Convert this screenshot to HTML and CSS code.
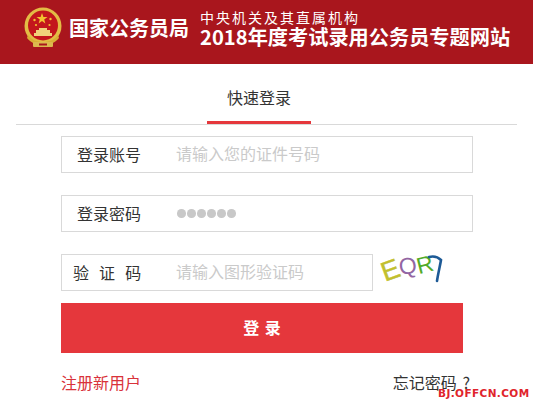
FILE: index.html
```html
<!DOCTYPE html>
<html lang="zh-CN">
<head>
    <meta charset="UTF-8">
    <meta name="viewport" content="width=device-width, initial-scale=1.0">
    <title>快速登录</title>
    <link rel="stylesheet" href="styles.css">
</head>
<body>
    <header class="top">
        <svg class="emblem" width="40" height="42" viewBox="0 0 40 42">
            <circle cx="20" cy="19" r="18.5" fill="#e3bc45"/>
            <circle cx="20" cy="18.5" r="15" fill="#c3161c"/>
            <polygon points="19,6 20.4,10 24.5,10 21.2,12.4 22.4,16.4 19,14 15.6,16.4 16.8,12.4 13.5,10 17.6,10" fill="#f2c230"/>
            <circle cx="11.5" cy="13" r="1.2" fill="#f2c230"/>
            <circle cx="27.5" cy="12" r="1.2" fill="#f2c230"/>
            <circle cx="13" cy="18" r="1.1" fill="#f2c230"/>
            <circle cx="26.5" cy="18" r="1.1" fill="#f2c230"/>
            <path d="M11 26h18v3H11zM13 23h14v3H13zM16 21h8v2h-8z" fill="#f0d27a"/>
            <path d="M5 28c4 5 9 7 15 7s11-2 15-7l1 3c-4 5-10 7-16 7s-12-2-16-7z" fill="#d9ae35"/>
            <rect x="10" y="35" width="20" height="5" rx="1" fill="#dcb84e"/>
            <rect x="16" y="36.5" width="8" height="2" fill="#a9161d"/>
        </svg>
        <div class="org">国家公务员局</div>
        <div class="titles">
            <div class="sub">中央机关及其直属机构</div>
            <div class="main">2018年度考试录用公务员专题网站</div>
        </div>
    </header>

    <div class="tabs">
        <span class="tab">快速登录</span>
    </div>

    <form class="login">
        <div class="field">
            <label class="name">登录账号</label>
            <span class="hint">请输入您的证件号码</span>
        </div>
        <div class="field">
            <label class="name">登录密码</label>
            <span class="dots"><i></i><i></i><i></i><i></i><i></i><i></i></span>
        </div>
        <div class="code-row">
            <div class="field short">
                <label class="name wide">验 证 码</label>
                <span class="hint">请输入图形验证码</span>
            </div>
            <svg class="captcha" width="64" height="32" viewBox="0 0 64 32">
                <text x="0" y="25" class="c1" transform="rotate(-20 9 18)">E</text>
                <text x="17" y="20" class="c2" transform="rotate(-8 25 14)">Q</text>
                <text x="35" y="19" class="c3" transform="rotate(-14 41 12)">R</text>
                <path d="M47 3c4-1 9 0 12 3-1 6-3 14-4 21" fill="none" stroke="#1d5a96" stroke-width="2.6" stroke-linecap="round"/>
            </svg>
        </div>
        <button class="submit" type="button">登 录</button>
        <div class="links">
            <a class="reg" href="#">注册新用户</a>
            <a class="forgot" href="#">忘记密码 ?</a>
        </div>
    </form>

    <div class="mark">BJ.OFFCN.COM</div>
</body>
</html>
```

FILE: styles.css
```css
html, body {
    height: 402px;
    overflow: hidden;
}
body {
    position: relative;
    margin: 0;
    background: #ffffff;
    font-family: "Noto Sans CJK SC", "Liberation Sans", sans-serif;
    color: #333333;
}
.top {
    display: flex;
    align-items: center;
    height: 64px;
    padding-left: 23px;
    background: #a9161d;
    color: #ffffff;
}
.emblem {
    flex: none;
    margin-top: -8px;
}
.org {
    margin-left: 6px;
    margin-top: -9px;
    width: 125px;
    font-size: 20px;
    font-weight: 700;
    line-height: 24px;
    white-space: nowrap;
}
.titles {
    margin-left: 6px;
    margin-top: -6px;
}
.sub {
    font-size: 14px;
    line-height: 16px;
    letter-spacing: 2px;
    white-space: nowrap;
}
.main {
    font-size: 20.2px;
    font-weight: 700;
    line-height: 24px;
    white-space: nowrap;
}
.tabs {
    display: flex;
    justify-content: center;
    height: 60px;
    margin: 0 16px;
    padding-right: 15px;
    border-bottom: 1px solid #d9d9d9;
}
.tab {
    width: 104px;
    height: 60px;
    box-sizing: border-box;
    border-bottom: 3px solid #e5373c;
    font-size: 16px;
    line-height: 66px;
    text-align: center;
    color: #333333;
}
.login {
    width: 412px;
    margin: 11px 0 0 61px;
}
.field {
    display: flex;
    align-items: center;
    height: 37px;
    padding-bottom: 1px;
    box-sizing: border-box;
    border: 1px solid #d9d9d9;
    margin-bottom: 22px;
    font-size: 16px;
}
.name {
    width: 114px;
    padding-left: 15px;
    box-sizing: border-box;
    flex: none;
    white-space: pre;
}
.name.wide {
    padding-left: 11px;
    word-spacing: 6.5px;
}
.hint {
    padding-bottom: 2px;
    color: #cacaca;
}
.dots {
    display: flex;
    gap: 1.5px;
    margin: 1px 0 0 1px;
}
.dots i {
    width: 8.5px;
    height: 8.5px;
    border-radius: 50%;
    background: #c8c8c8;
}
.code-row {
    display: flex;
    align-items: flex-start;
}
.field.short {
    width: 312px;
    margin-bottom: 12px;
}
.captcha {
    margin-left: 9px;
    flex: none;
    overflow: visible;
}
.captcha text {
    font-family: "Liberation Sans", sans-serif;
    font-size: 23px;
}
.captcha .c1 {
    font-size: 27px;
    stroke: #c2bf2e;
    stroke-width: 0.5px;
}
.c1 { fill: #c2bf2e; }
.c2 { fill: #9266a3; }
.c3 { fill: #52ab2a; }
.submit {
    display: block;
    width: 402px;
    height: 50px;
    border: 0;
    padding: 0 0 2px;
    background: #e5373c;
    color: #ffffff;
    font-family: inherit;
    font-size: 16px;
    font-weight: 700;
    word-spacing: 2px;
}
.links {
    display: flex;
    justify-content: space-between;
    width: 409px;
    margin-top: 18px;
    font-size: 16px;
    line-height: 22px;
}
.links a {
    text-decoration: none;
}
.reg {
    color: #d9323a;
}
.forgot {
    color: #333333;
    word-spacing: 2px;
}
.mark {
    position: absolute;
    left: 438px;
    top: 386px;
    font-family: "DejaVu Sans", sans-serif;
    font-size: 10.5px;
    font-weight: 700;
    line-height: 14px;
    letter-spacing: 0.4px;
    color: #e0242c;
    white-space: nowrap;
}
```
